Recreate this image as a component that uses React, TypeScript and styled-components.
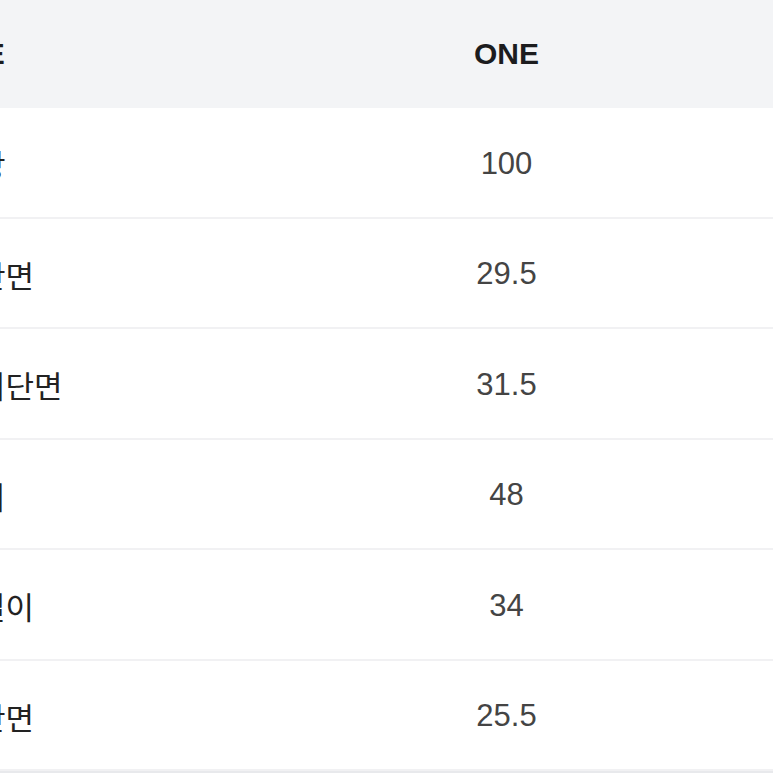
import React from "react";
import styled, { createGlobalStyle } from "styled-components";

const GlobalStyle = createGlobalStyle`
  html, body {
    margin: 0;
    padding: 0;
    background: #ffffff;
  }
  body {
    font-family: "Liberation Sans", "Noto Sans CJK KR", sans-serif;
    -webkit-font-smoothing: antialiased;
  }
`;

const Frame = styled.div`
  width: 773px;
  height: 773px;
  overflow: hidden;
  background: #ffffff;
`;

const Table = styled.div`
  display: grid;
  grid-template-columns: 340px 533px;
  margin-left: -100px;
  width: 873px;
`;

const HeaderRow = styled.div`
  display: contents;
`;

const HeaderCell = styled.div<{ $label?: boolean }>`
  height: 108px;
  background: #f3f4f6;
  display: flex;
  align-items: center;
  justify-content: ${(p) => (p.$label ? "flex-start" : "center")};
  padding-left: ${(p) => (p.$label ? "38px" : "0")};
  box-sizing: border-box;
  font-size: 30px;
  font-weight: 700;
  color: #1c1c1e;
`;

const Row = styled.div`
  display: contents;
`;

const Cell = styled.div<{ $label?: boolean }>`
  height: 110.5px;
  box-sizing: border-box;
  display: flex;
  align-items: center;
  justify-content: ${(p) => (p.$label ? "flex-start" : "center")};
  padding-left: ${(p) => (p.$label ? "20px" : "0")};
  padding-top: 3px;
  border-bottom: 2px solid #f1f1f3;
  font-size: 31px;
  font-weight: 400;
  color: ${(p) => (p.$label ? "#222222" : "#444444")};
  white-space: nowrap;
`;

const BottomBand = styled.div`
  height: 6px;
  background: #e8e9ec;
`;

const rows: { label: string; value: string }[] = [
  { label: "총기장", value: "100" },
  { label: "허리단면", value: "29.5" },
  { label: "엉덩이단면", value: "31.5" },
  { label: "허벅지", value: "48" },
  { label: "밑위길이", value: "34" },
  { label: "밑단단면", value: "25.5" },
];

export default function App() {
  return (
    <>
      <GlobalStyle />
      <Frame>
        <Table>
          <HeaderRow>
            <HeaderCell $label>SIZE</HeaderCell>
            <HeaderCell>ONE</HeaderCell>
          </HeaderRow>
          {rows.map((r) => (
            <Row key={r.label}>
              <Cell $label>{r.label}</Cell>
              <Cell>{r.value}</Cell>
            </Row>
          ))}
        </Table>
        <BottomBand />
      </Frame>
    </>
  );
}
